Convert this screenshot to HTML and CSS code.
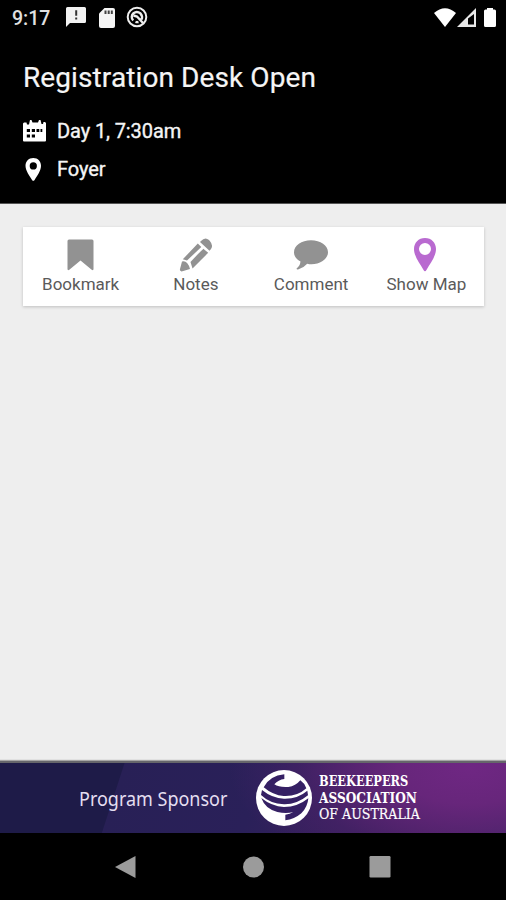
FILE: index.html
```html
<!DOCTYPE html>
<html lang="en">
<head>
<meta charset="utf-8">
<title>Registration Desk Open</title>
<link rel="stylesheet" href="styles.css">
</head>
<body>
<div class="screen">
  <div class="status">
    <span class="clock">9:17</span>
    <svg class="s-msg" width="20" height="20" viewBox="0 0 20 20"><path fill="#f2f2f2" d="M1.500 0h17Q20 0 20 1.500v13Q20 16 18.500 16H4l-4 4V1.500Q0 0 1.500 0z"/><path fill="#333" d="M9.200 3.300h2v5.500h-2zM9.200 10.500h2v2h-2z"/></svg>
    <svg class="s-sd" width="16" height="20" viewBox="0 0 16 20"><path fill="#f5f5f5" d="M5.500 0H14Q16 0 16 2v16q0 2-2 2H2q-2 0-2-2V5.500z"/><path fill="#444" d="M5.500 2.500h2v3.500h-2zM8.700 2.500h2v3.500h-2zM11.800 2.500h2v3.500h-2z"/></svg>
    <svg class="s-sync" width="22" height="22" viewBox="0 0 22 22" fill="none" stroke="#eee"><circle cx="11" cy="11" r="9.300" stroke-width="2"/><path stroke-width="2.400" d="M7.200 14.500A5 5 0 0 1 7.500 7.200Q11 4.500 14.500 7.500 17 10.500 15.500 13.500M9.500 15.800q1.500.6 3 .2M7.500 9.500l3.500 1L17 17"/></svg>
    <svg class="s-wifi" width="22" height="19" viewBox="0 0 22 19"><path fill="#fff" d="M0 5Q11-4.500 22 5L11 19z"/></svg>
    <svg class="s-cell" width="19" height="19" viewBox="0 0 19 19"><path fill="#e8e8e8" fill-rule="evenodd" d="M19 0v19H0zM17 6L11 10.500v6h6z"/></svg>
    <svg class="s-bat" width="12" height="19" viewBox="0 0 12 19"><path fill="#fff" d="M3 0h6v1.500h1.500Q12 1.500 12 3v14.500q0 1.500-1.500 1.500h-9Q0 19 0 17.500V3q0-1.500 1.500-1.500H3z"/></svg>
  </div>
  <header class="header">
    <h1>Registration Desk Open</h1>
    <div class="meta">
      <svg width="23" height="22" viewBox="0 0 23 22"><path fill="#fff" d="M1 2.500h2.500L4 4.500h2L7 0h1.500l1 2.500H15L16 0h1.500l1 4H20l.5-2h1.500l1 1v17.500q0 1-1 1H1q-1 0-1-1v-17z"/><path fill="#000" d="M3.800 9h3.200v3H3.800zM8.800 9h3.200v3H8.800zM13.500 9h2.800v3h-2.800zM17.500 9h1.800v3h-1.800zM3.800 14.500h3.200v3H3.800zM8.800 14.500h3.200v3H8.800z"/></svg>
      <span>Day 1, 7:30am</span>
    </div>
    <div class="meta">
      <svg width="23" height="23" viewBox="0 0 23 23"><path fill="#fff" fill-rule="evenodd" d="M10.300 0C5.500 0 2.500 3.500 2.500 7.700c0 5 4 10 6.700 14.500q1.100 1.200 2.200 0C14.200 17.700 18 12.700 18 7.700 18 3.500 15 0 10.300 0zm0 4.300a3.600 3.600 0 1 1 0 7.200 3.600 3.600 0 0 1 0-7.200z"/></svg>
      <span>Foyer</span>
    </div>
  </header>
  <main class="content">
    <nav class="actions">
      <div class="action">
        <svg width="34" height="34" viewBox="0 0 34 34"><path fill="#929292" d="M5 1.500h23Q29.500 1.500 29.500 3v28q0 1.800-1.800.8L16.500 22.500 5.300 31.800Q3.500 32.800 3.500 31V3Q3.500 1.500 5 1.500z"/></svg>
        <span>Bookmark</span>
      </div>
      <div class="action">
        <svg width="34" height="34" viewBox="0 0 34 34"><g fill="#929292"><path d="M22 3Q26-1.500 30 2l1 1.200Q34.500 7 32 11L30.500 12.800 21 4zM1 31L3 23.500Q8.500 22 11 31L2.500 33.500Q.5 33 1 31z"/><path d="M18.800 5.500L22.300 9 8 22.600 3.800 21.300zM24 10.500l5.200 4.300L13.500 30.500 11.500 24z"/></g><path stroke="#fff" stroke-width="1.300" d="M8.500 24.500L24.300 10"/></svg>
        <span>Notes</span>
      </div>
      <div class="action">
        <svg width="34" height="34" viewBox="0 0 34 34"><path fill="#929292" d="M17 2.200C26.500 2.200 34 7.500 34 14.200S26.500 26.200 17.500 26.200q-2.200 0-4.300-.5Q9.500 30 4 31.500q-1.600.2-1.400-1Q6 28 6.500 23.600 0 20.200 0 14.200C0 7.500 7.500 2.200 17 2.200z"/></svg>
        <span>Comment</span>
      </div>
      <div class="action">
        <svg width="34" height="34" viewBox="0 0 34 34"><path fill="#b96ad0" fill-rule="evenodd" d="M16 0C9.500 0 5 4.800 5 11c0 7.500 6 14.500 9.400 20.800q1.600 3 3.200 0C21 25.500 27 18.500 27 11 27 4.800 22.500 0 16 0zm0 5a6 6 0 1 1 0 12 6 6 0 0 1 0-12z"/></svg>
        <span>Show Map</span>
      </div>
    </nav>
  </main>
  <section class="banner">
    <div class="sponsor"><span>Program Sponsor</span></div>
    <svg class="globe" width="56" height="56" viewBox="15 23 168 168">
      <circle cx="99" cy="107" r="84" fill="#fff"/>
      <g fill="#352064">
        <path d="M100 36V50Q82 52 70 66Q84 76 112 74Q134 71 148 54Q160 62 166 78Q139 103 98 101Q66 99 38 75Q56 40 100 36z"/>
        <path d="M33 83Q64 108 99 109Q140 110 169 85L171 99Q137 127 99 126Q57 124 30 98z"/>
        <path d="M31 107Q62 132 99 134Q140 134 172 108Q170 134 151 153Q130 171 103 174V157Q117 156 127 149Q106 155 79 149Q42 139 31 107z"/>
      </g>
    </svg>
    <div class="org"><b class="o1">BEEKEEPERS</b><b class="o2">ASSOCIATION</b><span class="o3">OF AUSTRALIA</span></div>
  </section>
  <footer class="navbar">
    <svg width="21" height="24" viewBox="0 0 21 24"><path fill="#9b9b9b" d="M20.500 1v22L0 12z"/></svg>
    <svg width="22" height="22" viewBox="0 0 22 22"><circle cx="10.500" cy="11" r="10.500" fill="#9b9b9b"/></svg>
    <svg class="recent" width="22" height="22" viewBox="0 0 22 22"><rect x=".5" width="21" height="21.500" rx="1.200" fill="#9b9b9b"/></svg>
  </footer>
</div>
</body>
</html>
```

FILE: styles.css
```css
* { box-sizing: border-box; }
body { margin: 0; font-family: Roboto, sans-serif; background: #000; }
svg { display: block; flex: none; }
.screen { width: 506px; height: 900px; display: flex; flex-direction: column; overflow: hidden; }
.status { height: 36px; background: #000; color: #eee; display: flex; align-items: flex-start; padding: 8px 10px 0 12px; }
.clock { width: 54px; font-size: 19.500px; line-height: 21px; font-weight: 500; color: #e0e0e0; }
.s-msg { margin-top: -1px; }
.s-sd { margin: 0 0 0 13px; }
.s-sync { margin: -2px 0 0 11px; }
.s-wifi { margin-left: auto; }
.s-cell { margin-left: 1px; }
.s-bat { margin-left: 8px; }
.header { height: 168px; background: #000; color: #f5f5f5; padding: 24px 23px 0; border-bottom: 1px solid #555; }
h1 { margin: 0 0 18px; font-size: 28px; line-height: 36px; font-weight: 400; letter-spacing: .1px; white-space: nowrap; -webkit-text-stroke: .2px #f5f5f5; }
.meta { display: flex; align-items: center; gap: 11px; height: 34px; margin-bottom: 4px; font-size: 20px; font-weight: 400; letter-spacing: -.1px; -webkit-text-stroke: .35px #f5f5f5; }
.content { flex: 1; background: #eee; padding: 23px 22px 0 23px; }
.actions { height: 79px; display: grid; grid-template-columns: repeat(4, 1fr); background: #fff; box-shadow: 0 1px 3px rgba(0,0,0,.2); }
.action { display: flex; flex-direction: column; align-items: center; padding-top: 11px; font-size: 17px; line-height: 22px; color: #5a5a5a; white-space: nowrap; }
.action span { margin-top: 1px; }
.banner { height: 72px; border-top: 2px solid #66666b; display: flex; align-items: center; padding-left: 79px; color: #fff; background: radial-gradient(ellipse 240px 120px at 470px 5px, #6f2783 0, #67267b 30%, rgba(75,34,107,.5) 72%, transparent 100%), linear-gradient(108deg, #1e1b48 0, #1e1b48 118px, #282056 119px, #2a2059 50%, #452060 85%, #432465 100%); box-shadow: 0 -1px 1px rgba(0,0,0,.3); }
.sponsor { width: 177px; font-family: "Noto Sans", sans-serif; font-size: 20px; color: #e4def0; white-space: nowrap; }
.sponsor span { display: inline-block; transform: scaleX(.899); transform-origin: left; }
.globe { margin-right: 7px; }
.org { display: flex; flex-direction: column; align-items: flex-start; font-family: "DejaVu Serif", serif; font-size: 14px; line-height: 16.500px; white-space: nowrap; }
.org > * { transform-origin: left; }
.o1 { transform: scaleX(.815); }
.o2 { transform: scaleX(.868); }
.o3 { transform: scaleX(.9); -webkit-text-stroke: .2px #fff; }
.navbar { height: 67px; background: #000; display: flex; align-items: center; padding-left: 115px; gap: 107px; }
.recent { margin-left: -3px; }
```
